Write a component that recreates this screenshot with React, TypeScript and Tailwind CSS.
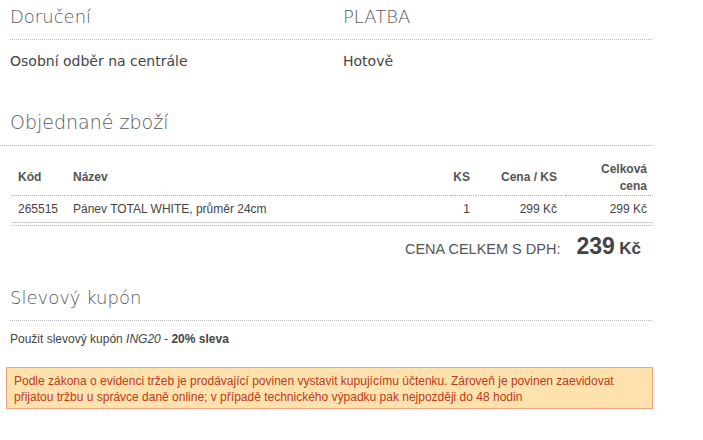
const headFont = { fontFamily: '"DejaVu Sans", sans-serif' };

const columns = [
  { key: "code", label: "Kód", width: "w-[53px]", align: "text-left" },
  { key: "name", label: "Název", width: "flex-1", align: "text-left" },
  { key: "qty", label: "KS", width: "w-[26px]", align: "text-right" },
  { key: "unit", label: "Cena / KS", width: "w-[85px]", align: "text-right" },
  { key: "total", label: "Celková cena", width: "w-[88px]", align: "text-right" },
];

const items = [
  {
    code: "265515",
    name: "Pánev TOTAL WHITE, průměr 24cm",
    qty: "1",
    unit: "299 Kč",
    total: "299 Kč",
  },
];

function Heading({ children }: { children: React.ReactNode }) {
  return (
    <h2
      className="text-[18px] font-extralight leading-[24px] text-[#5a5a5a]"
      style={headFont}
    >
      {children}
    </h2>
  );
}

function Dots({ className = "" }: { className?: string }) {
  return <div className={`border-t border-dotted border-[#bbb] ${className}`} />;
}

export default function App() {
  return (
    <div className="w-[703px] h-[440px] bg-white text-[#444]" style={{ fontFamily: '"Liberation Sans", Arial, sans-serif' }}>
      <div className="w-[653px]">
        {/* delivery / payment */}
        <div className="pl-[10px] pt-[5px]">
          <div className="grid grid-cols-[333px_1fr] pb-[10px]">
            <Heading>Doručení</Heading>
            <Heading>PLATBA</Heading>
          </div>
          <Dots className="border-[#9fd]" />
          <div
            className="grid grid-cols-[333px_1fr] pt-[11px] text-[14px] leading-[20px] text-[#444]"
            style={headFont}
          >
            <div>Osobní odběr na centrále</div>
            <div>Hotově</div>
          </div>
        </div>

        {/* ordered goods */}
        <div className="pl-[10px] pt-[39px] pb-[11px]">
          <h2
            className="text-[19px] font-extralight leading-[24px] text-[#5a5a5a]"
            style={headFont}
          >
            Objednané zboží
          </h2>
        </div>
        <Dots />

        <div className="ml-[12px] mt-[14px] text-[12px]">
          <div className="flex gap-[2px] font-bold text-[#555]">
            {columns.map((c) => (
              <div
                key={c.key}
                className={`${c.width} ${c.align} flex items-center ${c.align === "text-right" ? "justify-end" : ""} border-b border-dotted border-[#aaa] px-[6px] h-[36px] leading-[17px]`}
              >
                <span className={c.key === "total" ? "w-[60px]" : ""}>{c.label}</span>
              </div>
            ))}
          </div>
          {items.map((it) => (
            <div key={it.code} className="flex gap-[2px] border-b border-[#ccc] h-[27px] items-center">
              <div className="w-[53px] px-[6px]">{it.code}</div>
              <div className="flex-1 px-[6px]">{it.name}</div>
              <div className="w-[26px] px-[6px] text-right">{it.qty}</div>
              <div className="w-[85px] px-[6px] text-right">{it.unit}</div>
              <div className="w-[88px] px-[6px] text-right">{it.total}</div>
            </div>
          ))}
          <Dots className="mt-[2px]" />
        </div>

        <div className="flex justify-end items-baseline gap-[16px] pr-[12px] pt-[3px] text-[#555]">
          <span className="text-[14.5px] uppercase">Cena celkem s DPH:</span>
          <span className="font-bold text-[#444]">
            <span className="text-[23px]">239</span>{" "}
            <span className="text-[17px]">Kč</span>
          </span>
        </div>

        {/* coupon */}
        <div className="pl-[10px] pt-[22px] pb-[10px]">
          <Heading>Slevový kupón</Heading>
        </div>
        <Dots className="ml-[10px]" />
        <p className="pl-[10px] pt-[10px] text-[12px] leading-[16px] text-[#444]">
          Použit slevový kupón <i>ING20</i> - <b>20% sleva</b>
        </p>

        <div className="ml-[6px] mt-[20px] border border-[#f4a27f] bg-[#fee2ad] px-[7px] pt-[5px] pb-[3px] text-[12px] leading-[16px] text-[#c0391b]">
          Podle zákona o evidenci tržeb je prodávající povinen vystavit kupujícímu účtenku. Zároveň je povinen zaevidovat
          <br />
          přijatou tržbu u správce daně online; v případě technického výpadku pak nejpozději do 48 hodin
        </div>
      </div>
    </div>
  );
}
